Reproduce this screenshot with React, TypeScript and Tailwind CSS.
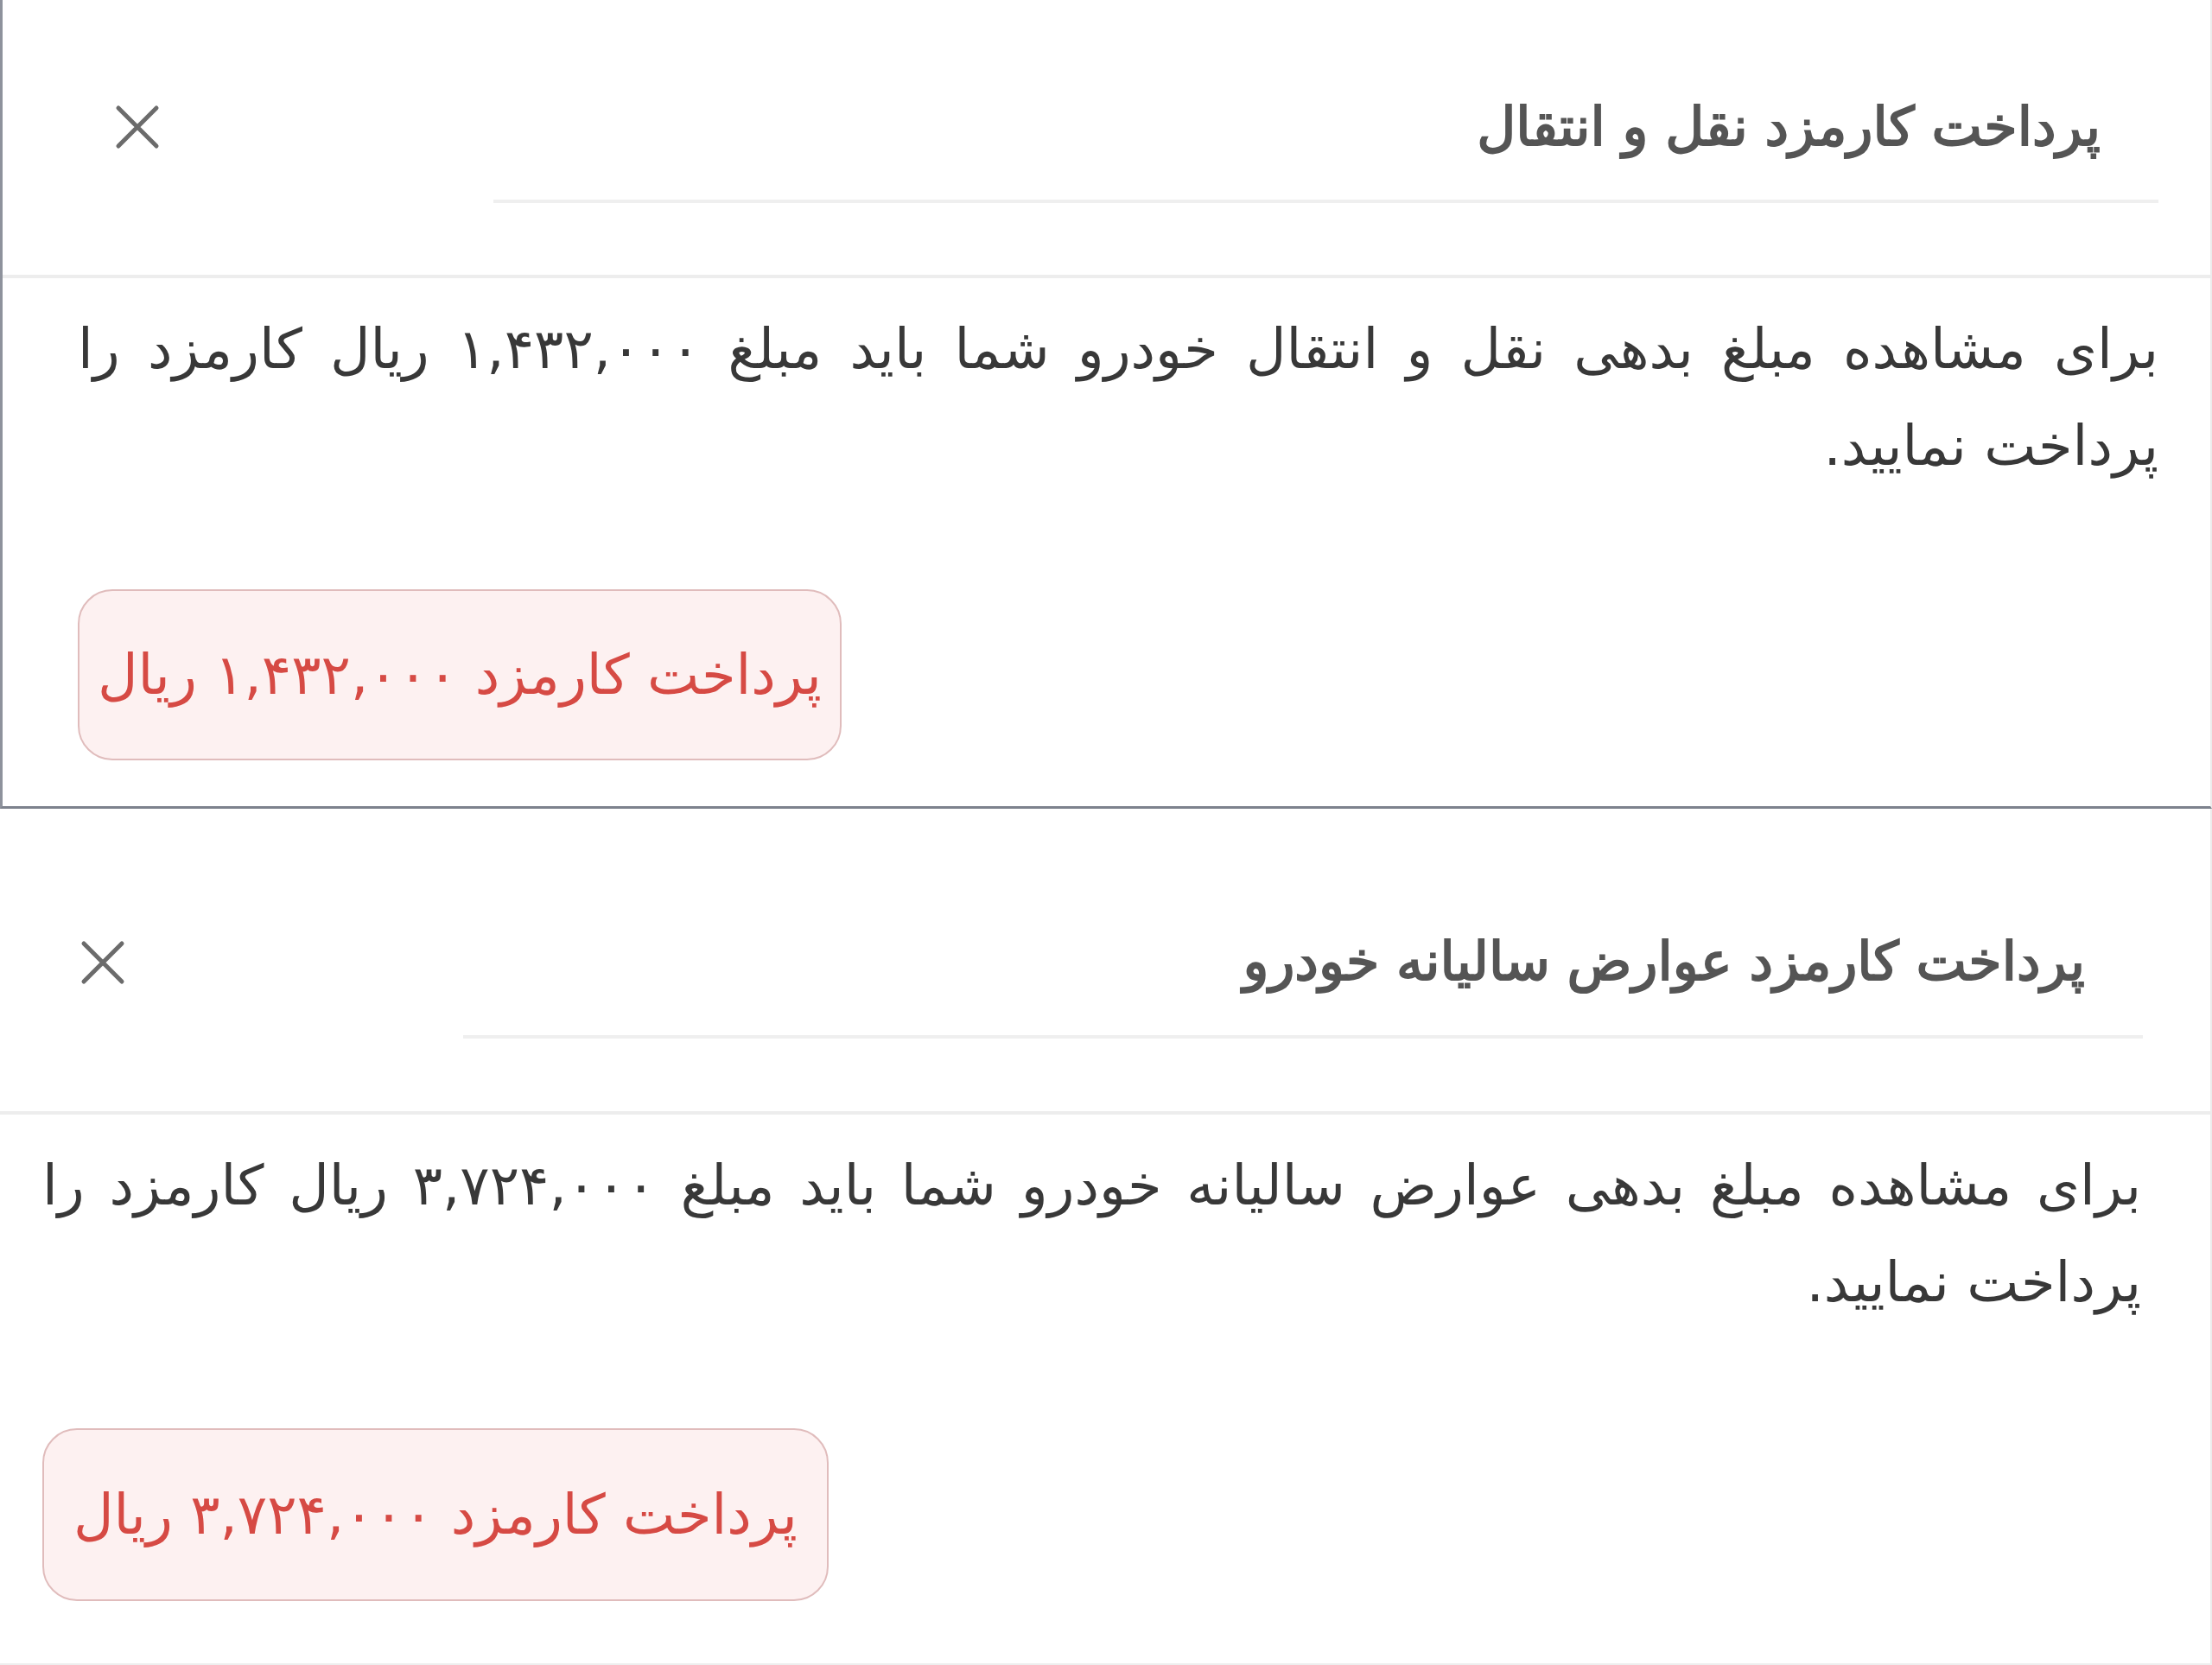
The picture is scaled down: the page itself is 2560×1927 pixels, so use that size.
import React from 'react';

type FeeCard = {
  title: string;
  subject: string;
  amount: string;
  frame: string;
  header: string;
  titleBox: string;
  close: string;
  body: string;
  button: string;
};

const cards: FeeCard[] = [
  {
    title: 'پرداخت کارمزد نقل و انتقال',
    subject: 'نقل و انتقال خودرو',
    amount: '۱,۴۳۲,۰۰۰',
    frame: 'h-[936px] border-l-[3px] border-b-[3px] border-r-2 border-l-[#8e929c] border-b-[#7d828d] border-r-[#ececec]',
    header: 'h-[322px]',
    titleBox: 'mr-[60px] w-[1927px] h-[235px] pt-[62px] pr-[67px]',
    close: 'ml-[129px] mt-[120px]',
    body: 'pt-[26px] pr-[60px] pl-[87px]',
    button: 'mt-[110px] w-[884px] h-[198px]',
  },
  {
    title: 'پرداخت کارمزد عوارض سالیانه خودرو',
    subject: 'عوارض سالیانه خودرو',
    amount: '۳,۷۲۴,۰۰۰',
    frame: 'h-[991px] border-r-2 border-b-2 border-r-[#ececec] border-b-[#eeeeee]',
    header: 'h-[354px]',
    titleBox: 'mr-[78px] w-[1944px] h-[266px] pt-[92px] pr-[67px]',
    close: 'ml-[92px] mt-[151px]',
    body: 'pt-[26px] pr-[80px] pl-[49px]',
    button: 'mt-[113px] w-[910px] h-[200px]',
  },
];

const CloseIcon = () => (
  <svg viewBox="0 0 54 54" className="h-[54px] w-[54px]" fill="none" stroke="#6b6b6b" strokeWidth={5} strokeLinecap="round">
    <path d="M5 5L49 49M49 5L5 49" />
  </svg>
);

const FeeModal: React.FC<{ card: FeeCard }> = ({ card }) => (
  <section dir="rtl" className={`bg-white ${card.frame}`}>
    {/* title row with the close button on the far side */}
    <div className={`flex items-start justify-between border-b-4 border-[#ededed] ${card.header}`}>
      <div className={`flex items-center border-b-4 border-[#efefef] ${card.titleBox}`}>
        <h2 className="text-[62px] font-normal leading-none text-[#555555] [-webkit-text-stroke:2px_#555555]">
          {card.title}
        </h2>
      </div>
      <button className={`flex items-center justify-center ${card.close}`}>
        <CloseIcon />
      </button>
    </div>

    <div className={card.body}>
      <div className="text-[64px] leading-[112px] text-[#383838]">
        <p className="text-justify [text-align-last:justify]">
          برای مشاهده مبلغ بدهی {card.subject} شما باید مبلغ {card.amount} ریال کارمزد را
        </p>
        <p>پرداخت نمایید.</p>
      </div>
      <div className="flex justify-end">
        <button
          className={`flex items-center justify-center rounded-[40px] border-2 border-[#e0bcbc] bg-[#fdf1f1] text-[64px] text-[#d64a44] ${card.button}`}
        >
          پرداخت کارمزد {card.amount} ریال
        </button>
      </div>
    </div>
  </section>
);

export default function App() {
  return (
    <div className="h-[1927px] w-[2560px] overflow-hidden bg-white font-['DejaVu_Sans',sans-serif]">
      {cards.map((card) => (
        <FeeModal key={card.title} card={card} />
      ))}
    </div>
  );
}
